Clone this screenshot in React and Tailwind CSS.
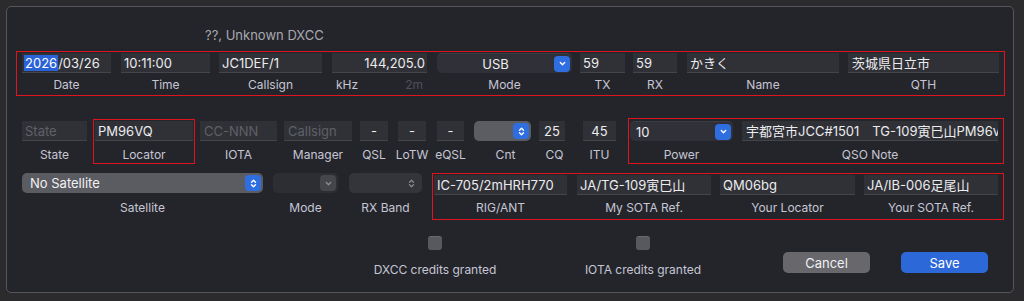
import React from "react";

const FONT = { fontFamily: 'Inter, "Noto Sans CJK JP", sans-serif' };

const ChevronDown = ({ color = "#ffffff" }) => (
  <svg viewBox="0 0 10 10" className="w-[9px] h-[9px]">
    <path d="M2.6 3.9 L5 6.3 L7.4 3.9" stroke={color} strokeWidth="1.5" fill="none" strokeLinecap="round" strokeLinejoin="round" />
  </svg>
);

const UpDown = ({ color = "#ffffff" }) => (
  <svg viewBox="0 0 10 12" className="w-[9px] h-[11px]">
    <path d="M2.8 4.6 L5 2.4 L7.2 4.6 M2.8 7.4 L5 9.6 L7.2 7.4" stroke={color} strokeWidth="1.5" fill="none" strokeLinecap="round" strokeLinejoin="round" />
  </svg>
);

function Input({ className = "", value, placeholder, align = "justify-start" }) {
  return (
    <div
      className={
        "h-[20px] shrink-0 bg-[#303137] border-b border-[#44454b] flex items-center overflow-hidden whitespace-nowrap text-[13px] leading-[16px] " +
        align + " " + (value ? "text-[#ececee] " : "text-[#5f6066] ") + className
      }
    >
      {value || placeholder}
    </div>
  );
}

function Label({ children, className = "", color = "text-[#c6c6d4]" }) {
  return (
    <div className={"text-[12px] leading-[16px] whitespace-nowrap text-center " + color + " " + className}>{children}</div>
  );
}

function Col({ className = "", label, labelClass = "mt-[4px]", children }) {
  return (
    <div className={"flex flex-col items-center shrink-0 " + className}>
      {children}
      <Label className={labelClass}>{label}</Label>
    </div>
  );
}

export default function App() {
  return (
    <div className="w-[1024px] h-[301px] bg-[#2b2b2d] pt-[6px] pl-[6px] overflow-hidden" style={FONT}>
      <div className="w-[1008px] h-[287px] rounded-[5px] border border-[#56565a] bg-[#24252b] flex flex-col">
        {/* header */}
        <div className="mt-[20px] pl-[198px] text-[13px] leading-[16px] text-[#a9a9b1]">??, Unknown DXCC</div>

        {/* row 1 */}
        <div className="mt-[8px] ml-[9px] w-[989px] border border-[#e0141c] pt-[1px] pb-[2px] flex items-start">
          <Col className="ml-[5px] w-[89px]" label="Date">
            <div className="w-[89px] h-[20px] bg-[#303137] border-b border-[#44454b] flex items-center pl-[2px] text-[13px] leading-[16px] text-[#ececee]">
              <span className="bg-[#2a62d8] text-white px-[1px]">2026</span>
              <span>/03/26</span>
            </div>
          </Col>
          <Col className="ml-[10px] w-[89px]" label="Time">
            <Input className="w-[89px] pl-[3px]" value="10:11:00" />
          </Col>
          <Col className="ml-[9px] w-[103px]" label="Callsign">
            <Input className="w-[103px] pl-[3px]" value="JC1DEF/1" />
          </Col>
          <div className="ml-[10px] w-[95px] flex flex-col shrink-0">
            <Input className="w-[95px] pr-[2px]" align="justify-end" value="144,205.0" />
            <div className="mt-[4px] flex justify-between pl-[4px] pr-[4px]">
              <Label>kHz</Label>
              <Label color="text-[#4f5057]">2m</Label>
            </div>
          </div>
          <Col className="ml-[10px] w-[135px]" label="Mode">
            <div className="w-[135px] h-[20px] rounded-[5px] bg-[#303138] border-t border-[#3c3d44] flex items-center pr-[2px]">
              <div className="flex-1 text-center text-[13px] leading-[16px] text-[#ececee]">USB</div>
              <div className="w-[16px] h-[16px] rounded-[4px] bg-[#2f6ee0] flex items-center justify-center">
                <ChevronDown />
              </div>
            </div>
          </Col>
          <Col className="ml-[8px] w-[45px]" label="TX">
            <Input className="w-[45px] pl-[3px]" value="59" />
          </Col>
          <Col className="ml-[8px] w-[44px]" label="RX">
            <Input className="w-[44px] pl-[3px]" value="59" />
          </Col>
          <Col className="ml-[10px] w-[152px]" label="Name">
            <Input className="w-[152px] pl-[3px]" value="かきく" />
          </Col>
          <Col className="ml-[9px] w-[151px]" label="QTH">
            <Input className="w-[151px] pl-[4px]" value="茨城県日立市" />
          </Col>
        </div>

        {/* row 2 */}
        <div className="mt-[22px] flex items-start">
          <Col className="ml-[15px] mt-[3px] w-[65px]" label="State" labelClass="mt-[6px]">
            <Input className="w-[65px] pl-[3px]" placeholder="State" />
          </Col>
          <div className="ml-[6px] mt-[1px] border border-[#e0141c] pt-[1px] px-[1px] shrink-0">
            <Col className="w-[98px]" label="Locator" labelClass="mt-[6px]">
              <Input className="w-[98px] pl-[3px]" value="PM96VQ" />
            </Col>
          </div>
          <Col className="ml-[5px] mt-[3px] w-[77px]" label="IOTA" labelClass="mt-[6px]">
            <Input className="w-[77px] pl-[4px]" placeholder="CC-NNN" />
          </Col>
          <Col className="ml-[7px] mt-[3px] w-[68px]" label="Manager" labelClass="mt-[6px]">
            <Input className="w-[68px] pl-[4px]" placeholder="Callsign" />
          </Col>
          <Col className="ml-[8px] mt-[3px] w-[28px]" label="QSL" labelClass="mt-[6px]">
            <Input className="w-[28px]" align="justify-center" value="-" />
          </Col>
          <Col className="ml-[10px] mt-[3px] w-[28px]" label="LoTW" labelClass="mt-[6px]">
            <Input className="w-[28px]" align="justify-center" value="-" />
          </Col>
          <Col className="ml-[11px] mt-[3px] w-[27px]" label="eQSL" labelClass="mt-[6px]">
            <Input className="w-[27px]" align="justify-center" value="-" />
          </Col>
          <Col className="ml-[10px] mt-[3px] w-[57px]" label="Cnt" labelClass="mt-[6px] ml-[6px]">
            <div className="w-[57px] h-[20px] rounded-[5px] bg-[#5c5d63] flex items-center justify-end pr-[2px]">
              <div className="w-[16px] h-[16px] rounded-[4px] bg-[#2f6ee0] flex items-center justify-center">
                <UpDown />
              </div>
            </div>
          </Col>
          <Col className="ml-[8px] mt-[3px] w-[26px]" label="CQ" labelClass="mt-[6px] ml-[5px]">
            <Input className="w-[26px]" align="justify-center" value="25" />
          </Col>
          <Col className="ml-[18px] mt-[3px] w-[33px]" label="ITU" labelClass="mt-[6px]">
            <Input className="w-[33px]" align="justify-center" value="45" />
          </Col>
          <div className="ml-[12px] w-[376px] border border-[#e0141c] pt-[2px] pl-[1px] flex items-start shrink-0">
            <Col className="w-[103px]" label="Power" labelClass="mt-[6px]">
              <div className="w-[103px] h-[20px] rounded-[5px] bg-[#303138] border-t border-[#3c3d44] flex items-center pl-[6px] pr-[2px]">
                <div className="flex-1 text-[13px] leading-[16px] text-[#ececee]">10</div>
                <div className="w-[16px] h-[16px] rounded-[4px] bg-[#2f6ee0] flex items-center justify-center">
                  <ChevronDown />
                </div>
              </div>
            </Col>
            <Col className="ml-[9px] w-[256px]" label="QSO Note" labelClass="mt-[6px]">
              <Input className="w-[256px] pl-[4px]" value="宇都宮市JCC#1501　TG-109寅巳山PM96vq" />
            </Col>
          </div>
        </div>

        {/* row 3 */}
        <div className="mt-[9px] flex items-start">
          <Col className="ml-[15px] w-[241px]" label="Satellite" labelClass="mt-[7px]">
            <div className="w-[241px] h-[20px] rounded-[5px] bg-[#5b5c62] flex items-center pl-[8px] pr-[2px]">
              <div className="flex-1 text-[13px] leading-[16px] text-[#f0f0f2]">No Satellite</div>
              <div className="w-[16px] h-[16px] rounded-[4px] bg-[#2f6ee0] flex items-center justify-center">
                <UpDown />
              </div>
            </div>
          </Col>
          <Col className="ml-[10px] w-[65px]" label="Mode" labelClass="mt-[7px]">
            <div className="w-[65px] h-[20px] rounded-[5px] bg-[#2d2e34] flex items-center justify-end pr-[2px]">
              <div className="w-[16px] h-[16px] rounded-[4px] bg-[#45464c] flex items-center justify-center">
                <ChevronDown color="#8b8c92" />
              </div>
            </div>
          </Col>
          <Col className="ml-[11px] w-[73px]" label="RX Band" labelClass="mt-[7px]">
            <div className="w-[73px] h-[20px] rounded-[5px] bg-[#34353b] flex items-center justify-end pr-[6px]">
              <UpDown color="#85868c" />
            </div>
          </Col>
          <div className="ml-[10px] w-[572px] border border-[#e0141c] pt-[1px] pb-[3px] pl-[1px] flex items-start shrink-0">
            <Col className="w-[133px]" label="RIG/ANT" labelClass="mt-[5px]">
              <Input className="w-[133px] pl-[3px]" value="IC-705/2mHRH770" />
            </Col>
            <Col className="ml-[10px] w-[134px]" label="My SOTA Ref." labelClass="mt-[5px]">
              <Input className="w-[134px] pl-[3px]" value="JA/TG-109寅巳山" />
            </Col>
            <Col className="ml-[9px] w-[135px]" label="Your Locator" labelClass="mt-[5px]">
              <Input className="w-[135px] pl-[3px]" value="QM06bg" />
            </Col>
            <Col className="ml-[9px] w-[134px]" label="Your SOTA Ref." labelClass="mt-[5px]">
              <Input className="w-[134px] pl-[3px]" value="JA/IB-006足尾山" />
            </Col>
          </div>
        </div>

        {/* bottom */}
        <div className="mt-[16px] flex items-start">
          <div className="ml-[353px] w-[150px] flex flex-col items-center shrink-0">
            <div className="w-[14px] h-[14px] rounded-[3px] bg-[#58595f] border-t border-[#6a6b70]" />
            <div className="mt-[12px] text-[12px] leading-[16px] text-[#c6c6d4] whitespace-nowrap">DXCC credits granted</div>
          </div>
          <div className="ml-[58px] w-[150px] flex flex-col items-center shrink-0">
            <div className="w-[14px] h-[14px] rounded-[3px] bg-[#58595f] border-t border-[#6a6b70]" />
            <div className="mt-[12px] text-[12px] leading-[16px] text-[#c6c6d4] whitespace-nowrap">IOTA credits granted</div>
          </div>
          <button className="ml-[65px] mt-[16px] w-[87px] h-[21px] rounded-[5px] bg-[#67676c] text-[13px] leading-[16px] text-[#f0f0f2] flex items-center justify-center shrink-0">
            Cancel
          </button>
          <button className="ml-[31px] mt-[16px] w-[87px] h-[21px] rounded-[5px] bg-[#2d68d9] text-[13px] leading-[16px] text-white flex items-center justify-center shrink-0">
            Save
          </button>
        </div>
      </div>
    </div>
  );
}
